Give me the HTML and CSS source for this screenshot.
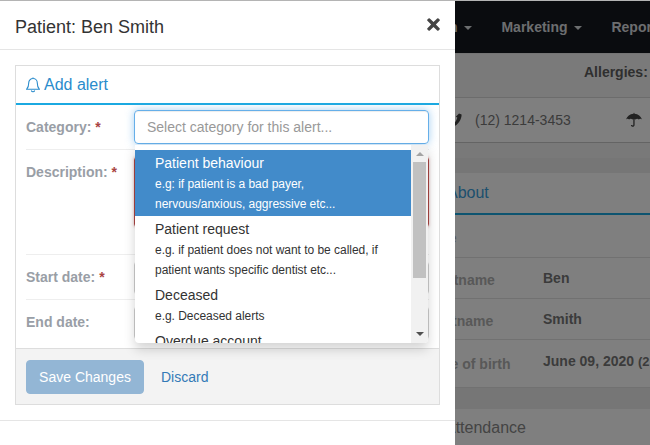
FILE: index.html
```html
<!DOCTYPE html>
<html lang="en">
<head>
<meta charset="utf-8">
<title>Patient: Ben Smith</title>
<link rel="stylesheet" href="styles.css">
</head>
<body>
<div class="page">
  <nav class="nav">
    <span class="nav-item">Admin <i class="caret"></i></span>
    <span class="nav-item">Marketing <i class="caret"></i></span>
    <span class="nav-item">Reports <i class="caret"></i></span>
  </nav>
  <div class="allergies"><b>Allergies:</b></div>
  <div class="contact">
    <svg class="phone" viewBox="0 0 12 14"><path d="M9 0.5l2.6 1c.2 4.500-3.600 10.500-8 12l-2.600-2.200 2.500-3 1.500.9c1-1 2-3 2.300-4.600l-1.500-.8z"/></svg>
    <span class="phone-num">(12) 1214-3453</span>
    <svg class="umbrella" viewBox="0 0 16 16"><path d="M8 0.500l.6 1.200c3.500.3 6.300 2.600 7.400 5.800-1-.9-2.300-.9-3.200 0-.9-.9-2.400-.9-3.300 0l-.9-.4v5.900c0 2.400-3.700 2.400-3.700 0h1.400c0 .7 1 .7 1 0v-5.900l-.9.4c-.9-.9-2.400-.9-3.300 0-.9-.9-2.200-.9-3.100 0 1.100-3.200 3.900-5.500 7.400-5.800z"/></svg>
  </div>
  <div class="gap"><div class="gap-band"></div></div>
  <section class="about">
    <h2 class="about-title">About</h2>
    <div class="info-row first"><span class="info-label">Title</span></div>
    <div class="info-row"><span class="info-label">Firstname</span><b class="info-value">Ben</b></div>
    <div class="info-row"><span class="info-label">Lastname</span><b class="info-value">Smith</b></div>
    <div class="info-row tall"><span class="info-label">Date of birth</span><b class="info-value">June 09, 2020 <small>(2</small></b></div>
  </section>
  <div class="gap-bottom"></div>
  <section class="attendance">Attendance</section>
</div>
<div class="backdrop"></div>

<div class="modal">
  <header class="modal-header">
    <h1 class="modal-title">Patient: Ben Smith</h1>
    <svg class="close" viewBox="0 0 12 12"><path d="M2.600.4L6 3.800 9.400.4a.9.9 0 0 1 1.200 0l1 1a.9.9 0 0 1 0 1.200L8.200 6l3.400 3.400a.9.9 0 0 1 0 1.200l-1 1a.9.9 0 0 1-1.200 0L6 8.200l-3.400 3.400a.9.9 0 0 1-1.200 0l-1-1a.9.9 0 0 1 0-1.200L3.800 6 .4 2.600a.9.9 0 0 1 0-1.200l1-1a.9.9 0 0 1 1.200 0z"/></svg>
  </header>
  <div class="modal-body">
    <div class="panel">
      <div class="panel-heading">
        <svg class="bell" viewBox="0 0 14 16"><path d="M7 1.500c-2.500 0-4.300 1.900-4.300 4.400 0 3.400-.8 5-2 6.300h12.600c-1.200-1.300-2-2.900-2-6.300 0-2.500-1.800-4.400-4.300-4.400zM7 .5v1M5.300 13.500a1.800 1.800 0 0 0 3.400 0"/></svg>
        <span>Add alert</span>
      </div>
      <form class="form">
        <div class="row row-category">
          <label class="label">Category: <em>*</em></label>
          <div class="field">
            <div class="select">Select category for this alert...</div>
            <div class="dropdown">
              <ul class="options">
                <li class="option active"><span class="opt-title">Patient behaviour</span><small>e.g: if patient is a bad payer,<br>nervous/anxious, aggressive etc...</small></li>
                <li class="option"><span class="opt-title">Patient request</span><small>e.g. if patient does not want to be called, if<br>patient wants specific dentist etc...</small></li>
                <li class="option"><span class="opt-title">Deceased</span><small>e.g. Deceased alerts</small></li>
                <li class="option"><span class="opt-title">Overdue account</span></li>
              </ul>
              <div class="scrollbar">
                <i class="arrow up"></i>
                <div class="thumb"></div>
                <i class="arrow down"></i>
              </div>
            </div>
          </div>
        </div>
        <div class="row row-description">
          <label class="label">Description: <em>*</em></label>
          <div class="field"><div class="textarea"></div></div>
        </div>
        <div class="row row-date">
          <label class="label">Start date: <em>*</em></label>
          <div class="field"><div class="input"></div></div>
        </div>
        <div class="row row-date last">
          <label class="label">End date:</label>
          <div class="field"><div class="input"></div></div>
        </div>
      </form>
      <div class="panel-footer">
        <button class="btn" type="button">Save Changes</button>
        <a class="discard" href="#">Discard</a>
      </div>
    </div>
  </div>
  <div class="modal-footer"></div>
</div>
</body>
</html>
```
FILE: styles.css
```css
* { box-sizing: border-box; }
html, body { margin: 0; height: 100%; overflow: hidden; }
body {
  width: 650px;
  height: 445px;
  position: relative;
  font-family: "Liberation Sans", Arial, sans-serif;
  font-size: 14px;
  color: #333;
  background: #f2f2f2;
}
.page { width: 650px; height: 445px; overflow: hidden; border-top: 1px solid #b4b4b4; }

.nav {
  height: 52px;
  background: #14181e;
  display: flex;
  align-items: center;
  padding-left: 414px;
  gap: 29px;
  white-space: nowrap;
  font-weight: bold;
  color: #d9dcdf;
}
.caret {
  display: inline-block;
  width: 0; height: 0;
  margin-left: 3px;
  vertical-align: middle;
  border-top: 4px solid #d9dcdf;
  border-left: 4px solid transparent;
  border-right: 4px solid transparent;
}
.nav-item { flex: none; }

.allergies {
  height: 45px;
  padding: 0 0 8px 584px;
  display: flex;
  align-items: center;
  white-space: nowrap;
  background: #f5f5f5;
  border-bottom: 1px solid #d8d8d8;
  border-top: 1px solid #e8e8e8;
  color: #5f5f5f;
}
.contact {
  height: 45px;
  background: #fff;
  border-bottom: 1px solid #c8c8c8;
  display: flex;
  align-items: center;
  position: relative;
  white-space: nowrap;
}
.phone { width: 12px; height: 14px; margin-left: 450px; fill: #444; }
.phone-num { margin-left: 13px; color: #777; }
.umbrella { width: 16px; height: 16px; margin-left: 55px; fill: #444; }
.gap { height: 30px; background: #f2f2f2; padding-top: 15px; }
.gap-band { height: 15px; background: #ececec; }

.about { background: #fff; height: 215px; }
.about-title {
  margin: 0;
  height: 42px;
  padding-left: 447px;
  border-bottom: 2px solid #1ba9e1;
  font-size: 16px;
  font-weight: normal;
  line-height: 40px;
  color: #3aa0dc;
}
.info-row {
  height: 41px;
  display: flex;
  align-items: center;
  padding-left: 428px;
  border-bottom: 1px solid #e2e2e2;
  white-space: nowrap;
}
.info-row.first { height: 43px; }
.info-row.tall { height: 48px; }
.info-label { width: 115px; flex: none; margin-top: 4px; font-weight: bold; color: #b0b0b0; }
.info-value { color: #777; }
.info-row.tall .info-label { margin-top: 0; }
.info-row.tall .info-value { margin-bottom: 6px; }
.info-value small { font-size: 13px; font-weight: bold; }
.gap-bottom { height: 21px; background: #ededed; }
.attendance { height: 40px; background: #fff; padding-left: 445px; font-size: 16px; line-height: 38px; color: #888; }

.backdrop { position: absolute; inset: 1px 0 0 0; background: rgba(0, 0, 0, 0.5); }

.modal {
  position: absolute;
  left: 0; top: 1px;
  width: 455px;
  height: 444px;
  background: #fff;
}
.modal-header {
  height: 49px;
  border-bottom: 1px solid #e5e5e5;
  padding: 0 15px;
  display: flex;
  align-items: center;
  justify-content: space-between;
}
.modal-title { margin: 0; padding-top: 4px; font-size: 18px; font-weight: normal; color: #333; }
.close { width: 13px; height: 13px; fill: #444; margin-top: -1px; }
.modal-body { padding: 15px 15px; height: 370px; }
.modal-footer { border-top: 1px solid #e5e5e5; }

.panel { width: 425px; height: 340px; border: 1px solid #ddd; display: flex; flex-direction: column; }
.panel-heading {
  height: 39px;
  flex: none;
  border-bottom: 2px solid #1ba9e1;
  display: flex;
  align-items: center;
  padding-left: 10px;
  font-size: 16px;
  color: #2a8ccc;
}
.bell { width: 14px; height: 16px; fill: none; stroke: #2a8ccc; stroke-width: 1.100; margin-right: 4px; }
.form { flex: 1; padding: 0 10px; }
.row { display: flex; border-bottom: 1px solid #eee; }
.row.last { border-bottom: 0; }
.label { width: 108px; flex: none; font-weight: bold; color: #999ea6; }
.label em { font-style: normal; color: #a94442; }
.field { flex: 1; position: relative; }
.row-category { height: 45px; padding-top: 5px; }
.row-category .label { line-height: 34px; }
.row-description { height: 105px; padding-top: 6px; }
.row-description .label { line-height: 32px; }
.row-date { height: 45px; padding-top: 6px; }
.row-date .label { line-height: 32px; }

.select {
  height: 34px;
  border: 1px solid #66afe9;
  border-radius: 4px;
  padding: 0 12px;
  line-height: 32px;
  color: #999;
  box-shadow: inset 0 1px 1px rgba(0,0,0,.075), 0 0 8px rgba(102,175,233,.6);
}
.textarea { height: 72px; border: 1px solid #a94442; border-radius: 4px; box-shadow: 0 0 3px rgba(169,68,66,.4); }
.input { height: 34px; border: 1px solid #ccc; border-radius: 4px; }

.dropdown {
  position: absolute;
  left: 1px; top: 35px;
  width: 293px;
  height: 198px;
  background: #fff;
  border-radius: 0 0 4px 4px;
  box-shadow: 0 6px 12px rgba(0,0,0,.175);
  display: flex;
  overflow: hidden;
  z-index: 2;
}
.options { list-style: none; margin: 0; padding: 5px 0 0; flex: 1; min-width: 0; overflow: hidden; }
.option { padding: 0 20px 2px; height: 66px; color: #333; }
.option:nth-child(n+3) { height: 46px; }
.opt-title { display: block; font-size: 14px; line-height: 26px; }
.option small { display: block; font-size: 12px; line-height: 20px; margin-top: -2px; letter-spacing: -0.03px; }
.option.active { background: #428bca; color: #fff; }
.scrollbar {
  width: 17px;
  flex: none;
  background: #f1f1f1;
  position: relative;
}
.thumb { position: absolute; left: 2px; top: 17px; width: 13px; height: 116px; background: #c1c1c1; }
.arrow { position: absolute; left: 5px; width: 0; height: 0; border-left: 4px solid transparent; border-right: 4px solid transparent; }
.arrow.up { top: 7px; border-bottom: 4px solid #a3a3a3; }
.arrow.down { bottom: 7px; border-top: 4px solid #505050; }

.panel-footer {
  height: 56px;
  flex: none;
  background: #f3f3f3;
  border-top: 1px solid #ddd;
  padding: 10px;
  display: flex;
  align-items: center;
  gap: 17px;
}
.btn {
  width: 118px;
  height: 34px;
  border: 1px solid #93b6d5;
  border-radius: 4px;
  background: #93b6d5;
  color: #fff;
  font: 14px "Liberation Sans", Arial, sans-serif;
  padding: 0;
}
.discard { color: #337ab7; text-decoration: none; }
```
